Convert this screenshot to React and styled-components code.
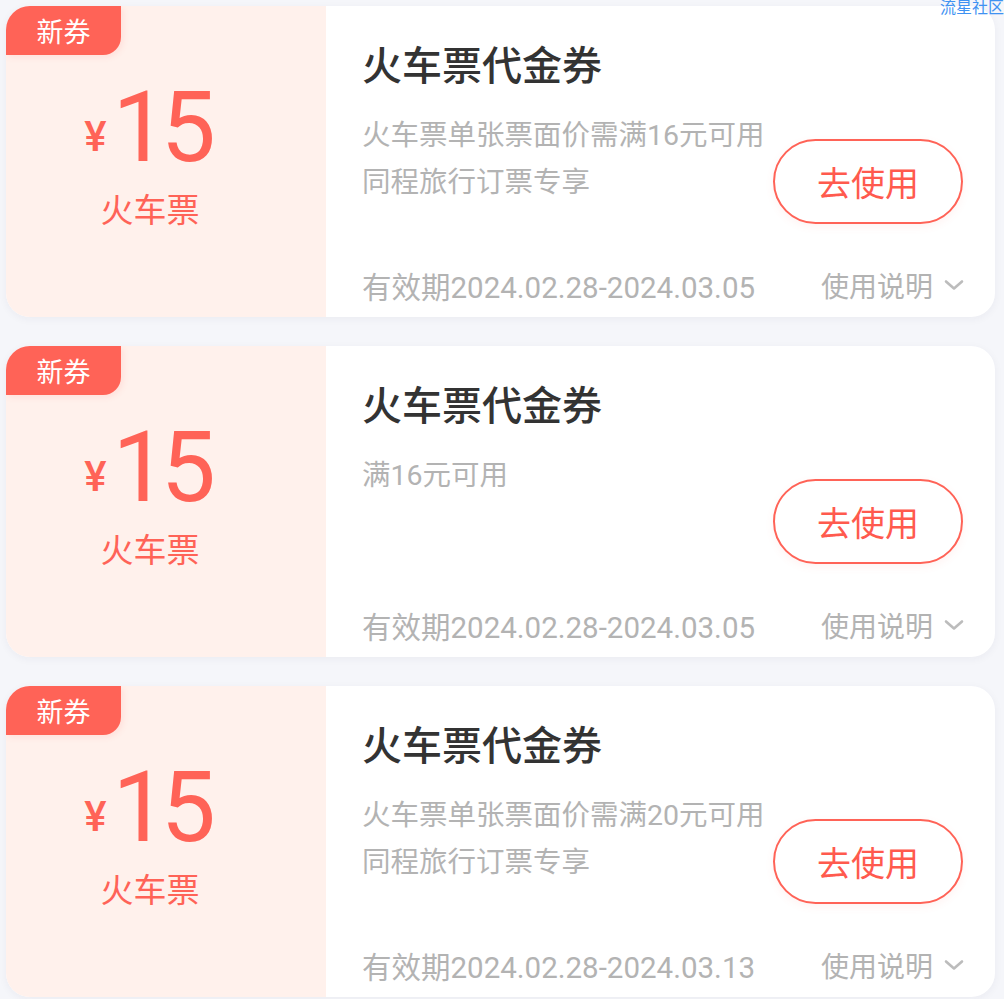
import React from 'react';
import styled, { createGlobalStyle } from 'styled-components';

const coupons = [
  {
    amount: 15,
    kind: '火车票',
    title: '火车票代金券',
    desc: ['火车票单张票面价需满16元可用', '同程旅行订票专享'],
    period: '有效期2024.02.28-2024.03.05',
  },
  {
    amount: 15,
    kind: '火车票',
    title: '火车票代金券',
    desc: ['满16元可用'],
    period: '有效期2024.02.28-2024.03.05',
  },
  {
    amount: 15,
    kind: '火车票',
    title: '火车票代金券',
    desc: ['火车票单张票面价需满20元可用', '同程旅行订票专享'],
    period: '有效期2024.02.28-2024.03.13',
  },
];

const Chevron = () => (
  <svg width="22" height="12" viewBox="0 0 22 12" fill="none">
    <polyline points="3,2.5 11,9.5 19,2.5" stroke="#bcbcbc" strokeWidth="2.6" strokeLinecap="round" strokeLinejoin="round" />
  </svg>
);

const CouponCard = ({ coupon }) => (
  <StyledCard>
    <StyledBadge>新券</StyledBadge>
    <StyledValuePanel>
      <StyledAmount>
        <StyledYen>¥</StyledYen>
        <StyledNumber>{coupon.amount}</StyledNumber>
      </StyledAmount>
      <StyledKind>{coupon.kind}</StyledKind>
    </StyledValuePanel>
    <StyledDetail>
      <StyledMain>
        <StyledInfo>
          <StyledTitle>{coupon.title}</StyledTitle>
          {coupon.desc.map((line) => (
            <StyledDesc key={line}>{line}</StyledDesc>
          ))}
        </StyledInfo>
        <StyledUseButton>去使用</StyledUseButton>
      </StyledMain>
      <StyledFooter>
        <StyledPeriod>{coupon.period}</StyledPeriod>
        <StyledRules>
          使用说明
          <Chevron />
        </StyledRules>
      </StyledFooter>
    </StyledDetail>
  </StyledCard>
);

const App = () => {
  return (
    <>
      <GlobalStyle />
      <StyledPage>
        <StyledWatermark>流星社区</StyledWatermark>
        {coupons.map((coupon, i) => (
          <CouponCard coupon={coupon} key={i} />
        ))}
      </StyledPage>
    </>
  );
};

const GlobalStyle = createGlobalStyle`
  body {
    margin: 0;
    background: #f5f6fa;
    font-family: Roboto, "Noto Sans CJK SC", sans-serif;
  }
`;

const StyledPage = styled.div`
  position: relative;
  display: flex;
  flex-direction: column;
  gap: 29px;
  padding: 6px 9px 0 6px;
  min-height: 999px;
  box-sizing: border-box;
`;

const StyledWatermark = styled.div`
  position: absolute;
  top: -1px;
  right: 0;
  font-size: 16px;
  line-height: 18px;
  color: #3f92f2;
  z-index: 2;
`;

const StyledCard = styled.div`
  position: relative;
  display: flex;
  height: 311px;
  background: #fff;
  border-radius: 24px;
  overflow: hidden;
  box-shadow: 0 2px 8px rgba(30, 40, 80, 0.05);
`;

const StyledBadge = styled.div`
  position: absolute;
  top: 0;
  left: 0;
  width: 115px;
  height: 49px;
  display: flex;
  align-items: center;
  justify-content: center;
  background: #ff6357;
  color: #fff;
  font-size: 27px;
  border-bottom-right-radius: 18px;
  box-shadow: 2px 2px 6px rgba(255, 99, 87, 0.12);
`;

const StyledValuePanel = styled.div`
  width: 320px;
  flex-shrink: 0;
  background: #fff1ec;
  display: flex;
  flex-direction: column;
  align-items: center;
  justify-content: center;
  padding: 0 32px 10px 0;
  box-sizing: border-box;
  color: #ff6357;
`;

const StyledAmount = styled.div`
  display: flex;
  align-items: flex-end;
  line-height: 1;
`;

const StyledYen = styled.span`
  font-size: 42px;
  font-weight: 500;
  margin: 0 6px 15px 0;
`;

const StyledNumber = styled.span`
  font-size: 98px;
  line-height: 90px;
  letter-spacing: -7px;
  margin-right: 7px;
`;

const StyledKind = styled.div`
  margin-top: 18px;
  font-size: 33px;
  line-height: 40px;
`;

const StyledDetail = styled.div`
  flex: 1;
  display: flex;
  flex-direction: column;
  padding: 35px 30px 8px 36px;
`;

const StyledMain = styled.div`
  flex: 1;
  display: flex;
  justify-content: space-between;
`;

const StyledInfo = styled.div`
  display: flex;
  flex-direction: column;
`;

const StyledTitle = styled.div`
  font-size: 40px;
  line-height: 52px;
  color: #333;
  font-weight: 500;
  margin-bottom: 19px;
`;

const StyledDesc = styled.div`
  font-size: 28.5px;
  line-height: 47px;
  color: #b3b3b3;
`;

const StyledUseButton = styled.button`
  align-self: flex-start;
  margin: 98px 2px 0 0;
  width: 190px;
  height: 85px;
  border: 2px solid #ff6357;
  border-radius: 43px;
  background: #fff;
  color: #ff5a4e;
  font-family: inherit;
  font-size: 34px;
  box-shadow: 0 3px 8px rgba(255, 99, 87, 0.08);
  cursor: pointer;
`;

const StyledFooter = styled.div`
  display: flex;
  justify-content: space-between;
  align-items: center;
  height: 48px;
`;

const StyledPeriod = styled.div`
  font-size: 29.5px;
  color: #b3b3b3;
`;

const StyledRules = styled.div`
  display: flex;
  align-items: center;
  gap: 10px;
  font-size: 28px;
  color: #b3b3b3;
`;

export default App;
